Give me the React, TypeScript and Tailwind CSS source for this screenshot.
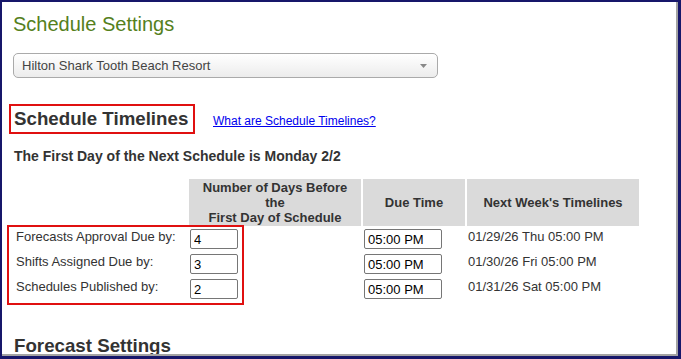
import React from 'react'

type Timeline = {
  label: string
  days: string
  time: string
  next: string
}

const timelines: Timeline[] = [
  { label: 'Forecasts Approval Due by:', days: '4', time: '05:00 PM', next: '01/29/26 Thu 05:00 PM' },
  { label: 'Shifts Assigned Due by:', days: '3', time: '05:00 PM', next: '01/30/26 Fri 05:00 PM' },
  { label: 'Schedules Published by:', days: '2', time: '05:00 PM', next: '01/31/26 Sat 05:00 PM' },
]

export default function App() {
  return (
    <div className="w-[681px] h-[359px] bg-[#17176a] pt-[2px] pl-[2px] pr-[3px] pb-[3px] font-['Liberation_Sans',Arial,sans-serif]">
      <div className="relative w-full h-full bg-white border-r-2 border-b-2 border-[#a3a3a3] overflow-hidden pl-[11px] pt-[11px]">
        {/* Title */}
        <h1 className="text-[20px] leading-[23px] text-[#55801c]">Schedule Settings</h1>

        {/* Property select */}
        <div className="mt-[17px] w-[425px] h-[25px] flex items-center justify-between pl-[8px] pr-[10px] border border-[#aaaaaa] rounded-[5px] bg-gradient-to-b from-white to-[#ececec]">
          <span className="text-[13px] leading-[23px] text-[#444]">Hilton Shark Tooth Beach Resort</span>
          <svg width="7" height="4" viewBox="0 0 7 4">
            <polygon points="0,0 7,0 3.5,4" fill="#888" />
          </svg>
        </div>

        {/* Schedule Timelines heading */}
        <div className="mt-[26px] -ml-[4px] flex items-baseline gap-[18px]">
          <h2 className="w-[186px] border-2 border-[#e01010] pl-[3px] text-[18.72px] leading-[26px] font-bold text-[#333]">
            Schedule Timelines
          </h2>
          <a href="#" className="text-[12px] text-[#0000ee] underline">
            What are Schedule Timelines?
          </a>
        </div>

        <p className="mt-[14px] ml-[1px] text-[14px] leading-[16px] font-bold text-[#333]">
          The First Day of the Next Schedule is Monday 2/2
        </p>

        {/* Timelines table */}
        <div className="mt-[15px] grid grid-cols-[174px_172px_102px_172px] gap-[2px] text-[13px] text-[#333]">
          <div />
          <div className="h-[47px] bg-[#dadada] flex items-center justify-center text-center font-bold leading-[15px]">
            Number of Days Before
            <br />
            the
            <br />
            First Day of Schedule
          </div>
          <div className="h-[47px] bg-[#dadada] flex items-center justify-center font-bold">Due Time</div>
          <div className="h-[47px] bg-[#dadada] flex items-center justify-center font-bold">Next Week's Timelines</div>

          {timelines.map((t) => (
            <React.Fragment key={t.label}>
              <div className="h-[23px] pt-[1px] pl-[3px] leading-[15px]">{t.label}</div>
              <div className="h-[23px] pt-[1px] pl-[1px]">
                <input
                  defaultValue={t.days}
                  className="w-[48px] h-[20px] px-[3px] border border-[#767676] rounded-[2px] text-[13px] text-black outline-none"
                />
              </div>
              <div className="h-[23px] pt-[1px] pl-[1px]">
                <input
                  defaultValue={t.time}
                  className="w-[78px] h-[20px] px-[3px] border border-[#767676] rounded-[2px] text-[13px] text-black outline-none"
                />
              </div>
              <div className="h-[23px] pt-[1px] pl-[1px] leading-[15px]">{t.next}</div>
            </React.Fragment>
          ))}
        </div>

        {/* Annotation box round labels and days */}
        <div className="absolute left-[5px] top-[223px] w-[237px] h-[80px] border-2 border-[#e01010] pointer-events-none" />

        <h2 className="mt-[34px] ml-[1px] text-[18.72px] leading-[22px] font-bold text-[#333]">Forecast Settings</h2>
      </div>
    </div>
  )
}
